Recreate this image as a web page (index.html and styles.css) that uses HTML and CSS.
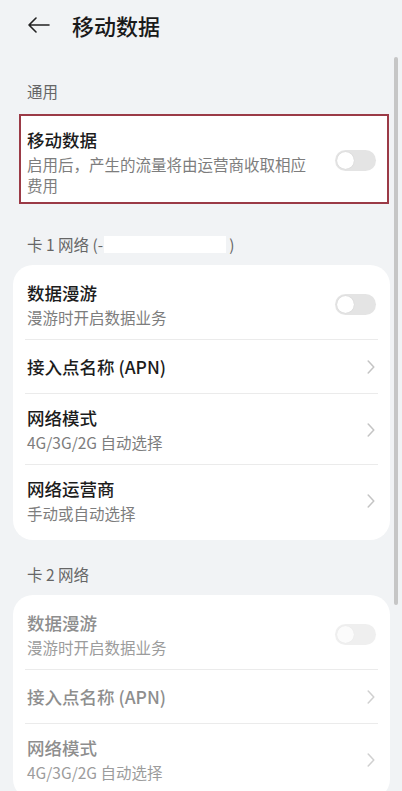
FILE: index.html
```html
<!DOCTYPE html>
<html lang="zh-CN">
<head>
<meta charset="utf-8">
<title>移动数据</title>
<link rel="stylesheet" href="styles.css">
</head>
<body>
<div class="page">
  <header class="appbar">
    <svg class="back" width="22" height="16" viewBox="0 0 22 16"><path d="M8 1 L1 8 L8 15 M1 8 H21" fill="none" stroke="#222" stroke-width="1.6" stroke-linecap="round" stroke-linejoin="round"/></svg>
    <h1 class="title">移动数据</h1>
  </header>

  <div class="section-title first">通用</div>
  <div class="hl-card">
    <div class="text">
      <div class="row-title">移动数据</div>
      <div class="row-sub">启用后，产生的流量将由运营商收取相应费用</div>
    </div>
    <div class="switch hl-switch"><span class="knob"></span></div>
  </div>

  <div class="section-title sim1">卡 1 网络 (-<span class="redact"></span>)</div>
  <div class="card">
    <div class="row two">
      <div class="text">
        <div class="row-title">数据漫游</div>
        <div class="row-sub">漫游时开启数据业务</div>
      </div>
      <div class="switch"><span class="knob"></span></div>
    </div>
    <div class="row one">
      <div class="text"><div class="row-title">接入点名称 (APN)</div></div>
      <svg class="chev" width="8" height="14" viewBox="0 0 8 14"><path d="M1.2 1 L6.8 7 L1.2 13" fill="none" stroke="#c4c4c4" stroke-width="1.5" stroke-linecap="round" stroke-linejoin="round"/></svg>
    </div>
    <div class="row two">
      <div class="text">
        <div class="row-title">网络模式</div>
        <div class="row-sub">4G/3G/2G 自动选择</div>
      </div>
      <svg class="chev" width="8" height="14" viewBox="0 0 8 14"><path d="M1.2 1 L6.8 7 L1.2 13" fill="none" stroke="#c4c4c4" stroke-width="1.5" stroke-linecap="round" stroke-linejoin="round"/></svg>
    </div>
    <div class="row two">
      <div class="text">
        <div class="row-title">网络运营商</div>
        <div class="row-sub">手动或自动选择</div>
      </div>
      <svg class="chev" width="8" height="14" viewBox="0 0 8 14"><path d="M1.2 1 L6.8 7 L1.2 13" fill="none" stroke="#c4c4c4" stroke-width="1.5" stroke-linecap="round" stroke-linejoin="round"/></svg>
    </div>
  </div>

  <div class="section-title sim2">卡 2 网络</div>
  <div class="card disabled">
    <div class="row two">
      <div class="text">
        <div class="row-title">数据漫游</div>
        <div class="row-sub">漫游时开启数据业务</div>
      </div>
      <div class="switch"><span class="knob"></span></div>
    </div>
    <div class="row one">
      <div class="text"><div class="row-title">接入点名称 (APN)</div></div>
      <svg class="chev" width="8" height="14" viewBox="0 0 8 14"><path d="M1.2 1 L6.8 7 L1.2 13" fill="none" stroke="#d0d0d0" stroke-width="1.5" stroke-linecap="round" stroke-linejoin="round"/></svg>
    </div>
    <div class="row two">
      <div class="text">
        <div class="row-title">网络模式</div>
        <div class="row-sub">4G/3G/2G 自动选择</div>
      </div>
      <svg class="chev" width="8" height="14" viewBox="0 0 8 14"><path d="M1.2 1 L6.8 7 L1.2 13" fill="none" stroke="#d0d0d0" stroke-width="1.5" stroke-linecap="round" stroke-linejoin="round"/></svg>
    </div>
  </div>

  <div class="scrollbar"></div>
</div>
</body>
</html>
```

FILE: styles.css
```css
* { box-sizing: border-box; }
html, body { margin: 0; padding: 0; }
body {
  background: #f1f3f5;
  font-family: "Noto Sans CJK SC", "Noto Sans", sans-serif;
  color: #1c1c1c;
}
.page {
  position: relative;
  width: 402px;
  height: 791px;
  overflow: hidden;
}
.appbar {
  height: 50px;
  display: flex;
  align-items: center;
  padding-left: 28px;
  gap: 22px;
}
.back { display: block; flex: none; }
.title {
  margin: 0;
  font-size: 22px;
  line-height: 30px;
  font-weight: 500;
  color: #1a1a1a;
}
.section-title {
  padding-left: 27px;
  font-size: 15.5px;
  line-height: 21px;
  color: #666;
  display: flex;
  align-items: center;
}
.section-title.first { margin-top: 31px; }
.section-title.sim1 { margin-top: 30px; margin-bottom: 10px; }
.section-title.sim2 { margin-top: 24px; margin-bottom: 10px; }
.redact {
  display: inline-block;
  width: 122px;
  height: 17px;
  background: #fff;
  margin: 0 3px 0 1px;
}
.hl-card {
  margin: 12px 13px 0 19px;
  border: 2px solid #9b3a46;
  background: #fff;
  padding: 12px 11px 6px 6px;
  display: flex;
  align-items: center;
}
.text { flex: 1; min-width: 0; margin-right: 24px; }
.row-title {
  font-size: 17.5px;
  line-height: 24px;
  font-weight: 500;
  color: #1c1c1c;
}
.row-sub {
  margin-top: 2px;
  font-size: 15.5px;
  line-height: 21px;
  color: #7d7d7d;
}
.hl-switch { margin-bottom: 4px; }
.switch {
  flex: none;
  width: 41px;
  height: 21px;
  border-radius: 11px;
  background: #e4e4e4;
  padding: 2px;
  display: flex;
  align-items: center;
}
.knob {
  width: 17px;
  height: 17px;
  border-radius: 50%;
  background: #fff;
  box-shadow: 0 0 1px rgba(0,0,0,0.18);
}
.card {
  margin: 0 12px 0 13px;
  background: #fff;
  border-radius: 20px;
  padding: 4px 12px;
}
.row {
  display: flex;
  align-items: center;
  padding: 0 2px;
  border-bottom: 1px solid #ebebeb;
}
.row:last-child { border-bottom: none; }
.row.two { padding-top: 12px; padding-bottom: 11px; }
.row.two:last-child { padding-bottom: 12px; }
.row.one { padding-top: 15px; padding-bottom: 14px; }
.chev { flex: none; display: block; margin-right: 1px; }
.disabled .row-title { color: #8e8e8e; }
.disabled .row-sub { color: #9c9c9c; }
.disabled .switch { background: #efefef; }
.disabled .knob { background: #fbfbfb; box-shadow: 0 0 1px rgba(0,0,0,0.08); }
.scrollbar {
  position: absolute;
  left: 394px;
  top: 57px;
  width: 4px;
  height: 548px;
  border-radius: 2px;
  background: #c6c6c6;
}
```
